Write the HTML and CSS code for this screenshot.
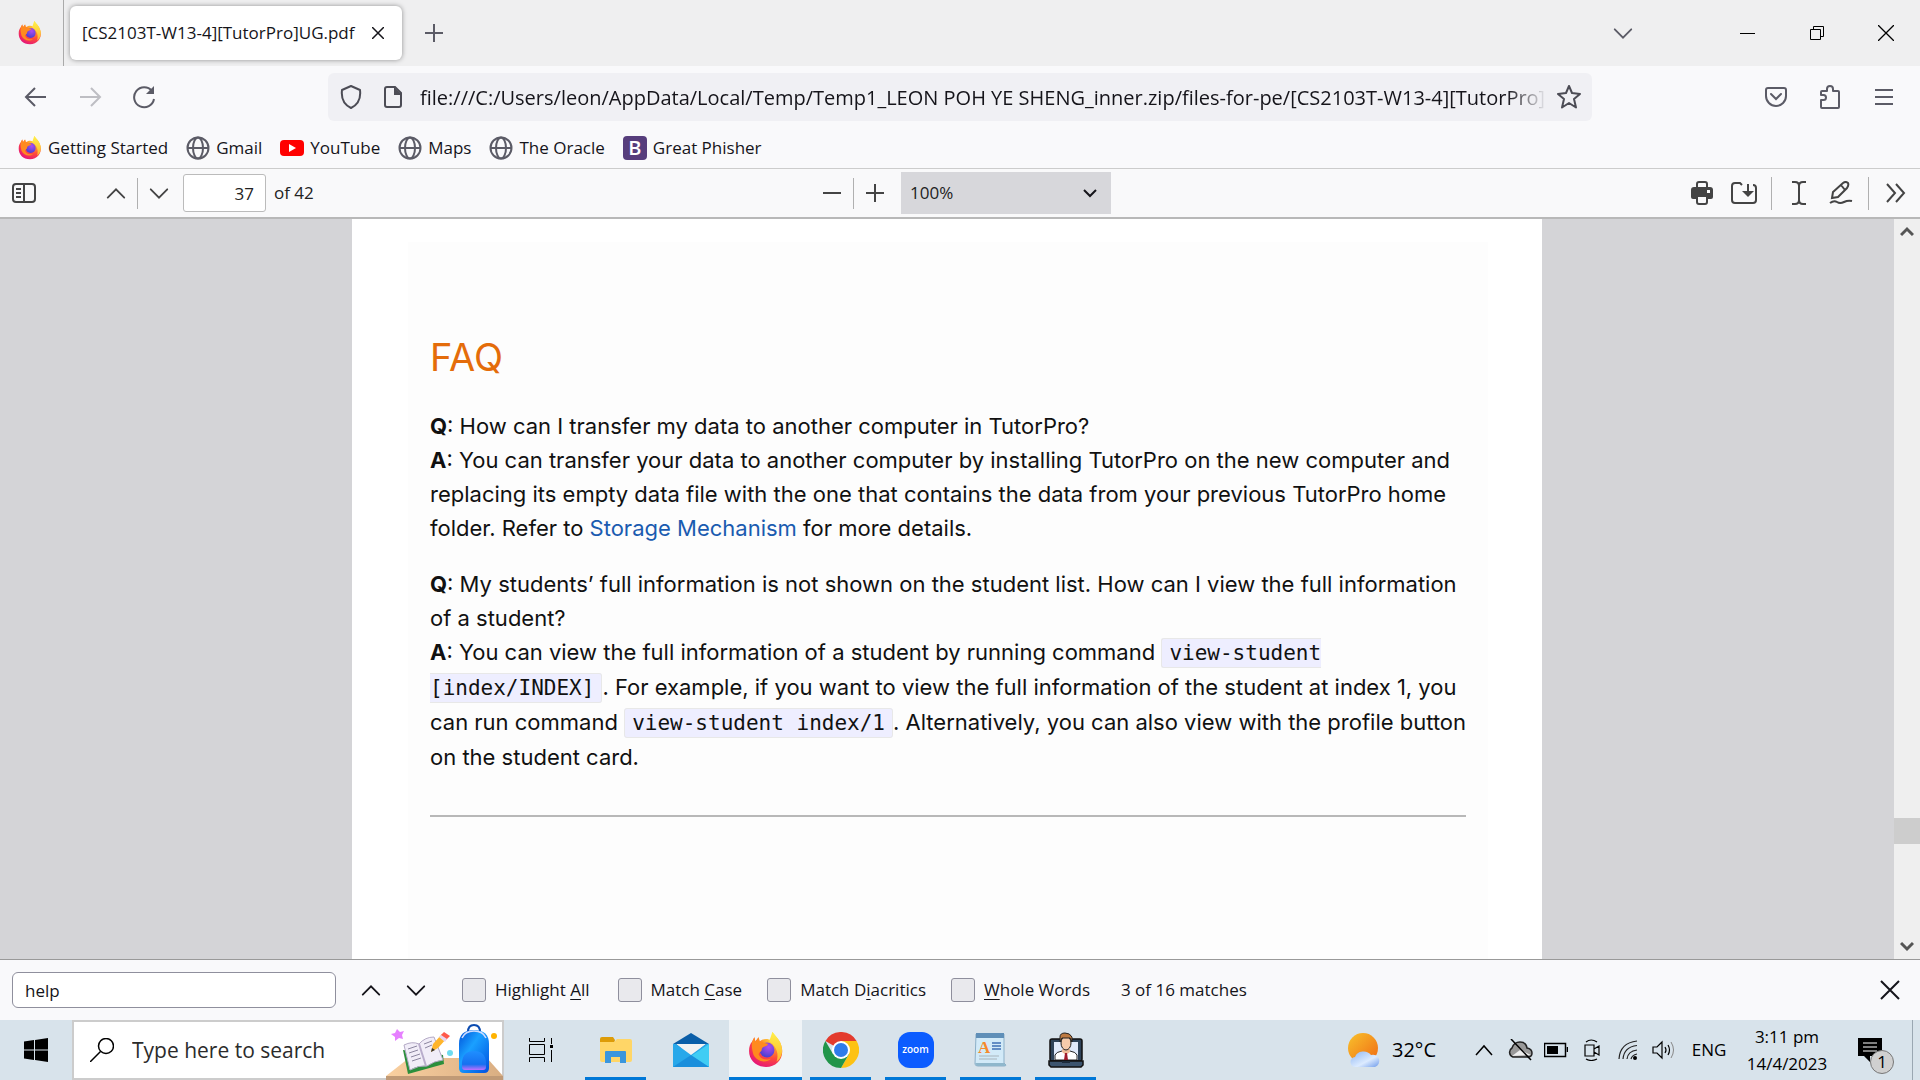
FILE: index.html
```html
<!DOCTYPE html>
<html lang="en">
<head>
<meta charset="utf-8">
<title>[CS2103T-W13-4][TutorPro]UG.pdf</title>
<link rel="stylesheet" href="styles.css">
</head>
<body>
<svg class="defs" aria-hidden="true">
  <defs>
    <radialGradient id="fx-body" cx="0.75" cy="0.1" r="1">
      <stop offset="0" stop-color="#fff44f"/><stop offset="0.35" stop-color="#ffa22a"/><stop offset="0.65" stop-color="#ff4b3a"/><stop offset="1" stop-color="#e3127d"/>
    </radialGradient>
    <radialGradient id="fx-globe" cx="0.6" cy="0.3" r="0.7">
      <stop offset="0" stop-color="#b04cf0"/><stop offset="1" stop-color="#4a3fd0"/>
    </radialGradient>
    <linearGradient id="fx-flame" x1="0" y1="0" x2="0" y2="1">
      <stop offset="0" stop-color="#fff04a"/><stop offset="1" stop-color="#ffb52e"/>
    </linearGradient>
    <symbol id="firefox" viewBox="0 0 32 34">
      <path d="M3 9 5 5l1 4 3-4 1 4c3-3 8-3 11-1l1-8c3 4 8 8 9 15 2 10-5 18-15 18S0 26 0 18c0-4 1-7 3-9z" fill="url(#fx-body)"/>
      <path d="M22 0c3 4 8 8 9 15 1 6-2 11-5 13 2-6 1-14-7-19 1-3 2-6 3-9z" fill="url(#fx-flame)"/>
      <circle cx="17" cy="17" r="7" fill="url(#fx-globe)"/>
      <path d="M3 9l2-4 1 4 3-4 1 4c3 0 5 2 8 2-1 3-5 2-6 5 0 3-2 2-3 5 2 5 8 6 12 4-5 5-14 3-17-4-1-4-2-8-1-12z" fill="#ff8a1f"/>
    </symbol>
    <symbol id="globe" viewBox="0 0 24 24">
      <g fill="none" stroke="#5b5b66" stroke-width="2"><circle cx="12" cy="12" r="10.500"/><ellipse cx="12" cy="12" rx="5" ry="10.500"/><path d="M2 12h20"/></g>
    </symbol>
    <symbol id="up" viewBox="0 0 24 24"><path d="M3 17l9-9 9 9" fill="none" stroke="currentColor" stroke-width="2" stroke-linecap="round"/></symbol>
    <symbol id="down" viewBox="0 0 24 24"><path d="M3 8l9 9 9-9" fill="none" stroke="currentColor" stroke-width="2" stroke-linecap="round"/></symbol>
    <symbol id="cross" viewBox="0 0 24 24"><path d="M3 3l18 18M21 3L3 21" fill="none" stroke="currentColor" stroke-width="2"/></symbol>
  </defs>
</svg>

<header class="tabs">
  <button class="home" aria-label="Firefox View"><svg width="24" height="24"><use href="#firefox"/></svg></button>
  <div class="tab">
    <span>[CS2103T-W13-4][TutorPro]UG.pdf</span>
    <button class="plain" aria-label="Close tab"><svg width="12" height="12" viewBox="0 0 12 12"><path d="M0 0l12 12M12 0L0 12" stroke="#15141a" stroke-width="1.500"/></svg></button>
  </div>
  <button class="icon-btn" aria-label="New tab"><svg width="18" height="18" viewBox="0 0 18 18"><path d="M9 0v18M0 9h18" stroke="#5b5b66" stroke-width="2"/></svg></button>
  <div class="window-buttons">
    <button class="icon-btn list-tabs" aria-label="List all tabs"><svg width="22" height="22"><use href="#down"/></svg></button>
    <button aria-label="Minimize"><svg width="16" height="16" viewBox="0 0 16 16"><path d="M0 8.500h15" stroke="#000"/></svg></button>
    <button aria-label="Restore"><svg width="16" height="16" viewBox="0 0 16 16"><path d="M1.500 4.500h10v10h-10zM4.500 4V1.500h10v10H12" fill="none" stroke="#000"/></svg></button>
    <button aria-label="Close"><svg width="16" height="16" viewBox="0 0 16 16"><path d="M0 0l16 16M16 0L0 16" stroke="#000" stroke-width="1.300"/></svg></button>
  </div>
</header>

<nav class="nav">
  <button class="icon-btn" aria-label="Back"><svg width="24" height="24" viewBox="0 0 24 24"><path d="M22 12H3M11 3l-9 9 9 9" fill="none" stroke="#5b5b66" stroke-width="2"/></svg></button>
  <button class="icon-btn" aria-label="Forward" disabled><svg width="24" height="24" viewBox="0 0 24 24"><path d="M2 12h19M13 3l9 9-9 9" fill="none" stroke="#bebec3" stroke-width="2"/></svg></button>
  <button class="icon-btn" aria-label="Reload"><svg width="24" height="24" viewBox="0 0 24 24"><path d="M20 6a10 10 0 1 0 2 8" fill="none" stroke="#5b5b66" stroke-width="2"/><path d="M22 1v8h-8z" fill="#5b5b66"/></svg></button>
  <div class="url">
    <svg width="24" height="24" viewBox="0 0 24 24"><path d="M12 1l9 4c1 8-1 14-9 18C4 19 2 13 3 5z" fill="none" stroke="#4c4c55" stroke-width="2" stroke-linejoin="round"/></svg>
    <svg width="20" height="22" viewBox="0 0 20 22"><path d="M4 1h8l6 6v12a2 2 0 0 1-2 2H4a2 2 0 0 1-2-2V3a2 2 0 0 1 2-2z" fill="none" stroke="#4c4c55" stroke-width="2"/><path d="M11 1l8 8h-8z" fill="#4c4c55"/></svg>
    <input type="text" aria-label="Address" value="file:///C:/Users/leon/AppData/Local/Temp/Temp1_LEON POH YE SHENG_inner.zip/files-for-pe/[CS2103T-W13-4][TutorPro]UG.pdf">
    <button class="plain" aria-label="Bookmark this page"><svg width="24" height="24" viewBox="0 0 24 24"><path d="M12 1l3 7 8 1-6 5 2 8.500L12 18l-7 4.500L7 14 1 9l8-1z" fill="none" stroke="#4c4c55" stroke-width="2" stroke-linejoin="round"/></svg></button>
  </div>
  <button class="icon-btn" aria-label="Save to Pocket"><svg width="22" height="22" viewBox="0 0 22 22"><path d="M3 2h16q2 0 2 2v6a10 10 0 0 1-20 0V4q0-2 2-2z" fill="none" stroke="#5b5b66" stroke-width="2"/><path d="M6 8l5 5 5-5" fill="none" stroke="#5b5b66" stroke-width="2" stroke-linecap="round"/></svg></button>
  <button class="icon-btn" aria-label="Extensions"><svg width="24" height="24" viewBox="0 0 24 24"><path d="M3 22v-7h2.500a2.500 2.500 0 0 0 0-5H3V7q0-1 1-1h5V4a3 3 0 0 1 6 0v2h5q1 0 1 1v15q0 1-1 1H4q-1 0-1-1z" fill="none" stroke="#5b5b66" stroke-width="2" stroke-linejoin="round"/></svg></button>
  <button class="icon-btn" aria-label="Menu"><svg width="20" height="20" viewBox="0 0 20 20"><path d="M1 3h18M1 10h18M1 17h18" stroke="#5b5b66" stroke-width="2"/></svg></button>
</nav>

<nav class="bookmarks">
  <a href="#"><svg width="24" height="24"><use href="#firefox"/></svg>Getting Started</a>
  <a href="#"><svg width="24" height="24"><use href="#globe"/></svg>Gmail</a>
  <a href="#"><svg width="24" height="24" viewBox="0 0 24 24"><rect y="4" width="24" height="16" rx="4" fill="#f00"/><path d="M9 8v8l7-4z" fill="#fff"/></svg>YouTube</a>
  <a href="#"><svg width="24" height="24"><use href="#globe"/></svg>Maps</a>
  <a href="#"><svg width="24" height="24"><use href="#globe"/></svg>The Oracle</a>
  <a href="#"><span class="letter">B</span>Great Phisher</a>
</nav>

<div class="pdfbar">
  <div class="group">
    <button class="tool" aria-label="Toggle sidebar"><svg width="24" height="20" viewBox="0 0 24 20"><rect x="1" y="1" width="22" height="18" rx="3" fill="none" stroke="#444" stroke-width="2"/><path d="M12 1v18M4 6h5M4 10h5M4 14h5" stroke="#444" stroke-width="2"/></svg></button>
    <button class="tool prev" aria-label="Previous page"><svg width="22" height="22"><use href="#up"/></svg></button>
    <span class="sep"></span>
    <button class="tool" aria-label="Next page"><svg width="22" height="22"><use href="#down"/></svg></button>
    <input class="page-number" type="text" aria-label="Page" value="37">
    <span>of 42</span>
  </div>
  <div class="group zoom">
    <button class="tool" aria-label="Zoom out"><svg width="18" height="18" viewBox="0 0 18 18"><path d="M0 9h18" stroke="#444" stroke-width="2"/></svg></button>
    <span class="sep"></span>
    <button class="tool" aria-label="Zoom in"><svg width="18" height="18" viewBox="0 0 18 18"><path d="M9 0v18M0 9h18" stroke="#444" stroke-width="2"/></svg></button>
    <span class="select"><select aria-label="Zoom"><option>100%</option></select><svg width="14" height="14" viewBox="0 0 14 14"><path d="M1 4l6 6 6-6" fill="none" stroke="#15141a" stroke-width="2"/></svg></span>
  </div>
  <div class="group end">
    <button class="tool" aria-label="Print"><svg width="24" height="24" viewBox="0 0 24 24"><path d="M4 6h16a3 3 0 0 1 3 3v7q0 2-2 2H3q-2 0-2-2V9a3 3 0 0 1 3-3z" fill="#444"/><path d="M7 7V3q0-2 2-2h6q2 0 2 2v4" fill="none" stroke="#444" stroke-width="2"/><path d="M7 15v6q0 2 2 2h6q2 0 2-2v-6z" fill="#f9f9fa" stroke="#444" stroke-width="2"/><rect x="17" y="9" width="3" height="3" fill="#fff"/></svg></button>
    <button class="tool" aria-label="Save"><svg width="26" height="22" viewBox="0 0 26 22"><path d="M11 3L9 1H4Q1 1 1 4v14q0 3 3 3h18q3 0 3-3V6q0-3-3-3" fill="none" stroke="#444" stroke-width="2"/><path d="M17 2v8" stroke="#444" stroke-width="2"/><path d="M11 9h12l-6 6z" fill="#444"/></svg></button>
    <span class="sep"></span>
    <button class="tool" aria-label="Text"><svg width="14" height="24" viewBox="0 0 14 24"><path d="M0 1h3q4 0 4 4v14q0 4-4 4H0M14 1h-3q-4 0-4 4v14q0 4 4 4h3" fill="none" stroke="#444" stroke-width="2"/></svg></button>
    <button class="tool" aria-label="Draw"><svg width="24" height="24" viewBox="0 0 24 24"><path d="M3 17l1-6L14 2q3-2 5 0 1 2-1 5L9 16zM12 4l4 5" fill="none" stroke="#444" stroke-width="2"/><path d="M1 22q4-3 7-1t7 0 8-1" fill="none" stroke="#444" stroke-width="2"/></svg></button>
    <span class="sep"></span>
    <button class="tool" aria-label="More tools"><svg width="20" height="20" viewBox="0 0 20 20"><path d="M1 1l8 9-8 9M10 1l8 9-8 9" fill="none" stroke="#444" stroke-width="2"/></svg></button>
  </div>
</div>

<main class="viewer">
  <div class="canvas">
    <article class="sheet">
      <div class="content">
        <h1>FAQ</h1>
        <p><b>Q</b>: How can I transfer my data to another computer in TutorPro?<br>
        <b>A</b>: You can transfer your data to another computer by installing TutorPro on the new computer and replacing its empty data file with the one that contains the data from your previous TutorPro home folder. Refer to <a href="#">Storage Mechanism</a> for more details.</p>
        <p><b>Q</b>: My students’ full information is not shown on the student list. How can I view the full information of a student?<br>
        <b>A</b>: You can view the full information of a student by running command <code>view-student [index/INDEX]</code>. For example, if you want to view the full information of the student at index 1, you can run command <code>view-student index/1</code>. Alternatively, you can also view with the profile button on the student card.</p>
        <hr>
      </div>
    </article>
  </div>
  <div class="scrollbar">
    <button aria-label="Scroll up"><svg width="14" height="12" viewBox="0 0 14 12"><path d="M1 10l6-6 6 6" fill="none" stroke="#555" stroke-width="3"/></svg></button>
    <div class="above"></div><div class="thumb"></div><div class="below"></div>
    <button aria-label="Scroll down"><svg width="14" height="12" viewBox="0 0 14 12"><path d="M1 2l6 6 6-6" fill="none" stroke="#555" stroke-width="3"/></svg></button>
  </div>
</main>

<form class="findbar">
  <input class="find" type="text" aria-label="Find in page" value="help">
  <button type="button" class="find-btn" aria-label="Previous match"><svg width="22" height="22"><use href="#up"/></svg></button>
  <button type="button" class="find-btn" aria-label="Next match"><svg width="22" height="22"><use href="#down"/></svg></button>
  <label class="first"><input type="checkbox"><span>Highlight <u>A</u>ll</span></label>
  <label><input type="checkbox"><span>Match <u>C</u>ase</span></label>
  <label><input type="checkbox"><span>Match D<u>i</u>acritics</span></label>
  <label><input type="checkbox"><span><u>W</u>hole Words</span></label>
  <output>3 of 16 matches</output>
  <button type="button" class="plain close" aria-label="Close find bar"><svg width="24" height="24"><use href="#cross"/></svg></button>
</form>

<footer class="taskbar">
  <button class="start" aria-label="Start"><svg width="24" height="24" viewBox="0 0 24 24"><path d="M0 3.500L10 2v9.500H0zM11 2L24 0v11.500H11zM0 12.500h10V22L0 20.500zM11 12.500h13V24l-13-2z"/></svg></button>
  <div class="search">
    <svg width="24" height="24" viewBox="0 0 24 24"><circle cx="16" cy="8" r="7.500" fill="none" stroke="#000" stroke-width="1.500"/><path d="M10.500 13.500L0 24" stroke="#000" stroke-width="1.500"/></svg>
    <input type="text" aria-label="Search" placeholder="Type here to search">
    <svg class="art" width="120" height="60" viewBox="0 0 120 60">
      <defs>
        <linearGradient id="bag" x1="0" y1="0" x2="1" y2="1"><stop offset="0" stop-color="#0050d8"/><stop offset="0.4" stop-color="#1aa0ff"/><stop offset="1" stop-color="#0050e0"/></linearGradient>
        <linearGradient id="pocket" x1="0" y1="0" x2="0" y2="1"><stop offset="0" stop-color="#1f8fff"/><stop offset="0.7" stop-color="#1670f0"/><stop offset="1" stop-color="#c070ff"/></linearGradient>
        <linearGradient id="desk" x1="0" y1="0" x2="1" y2="0"><stop offset="0" stop-color="#fad0a0"/><stop offset="1" stop-color="#d9ae82"/></linearGradient>
      </defs>
      <path d="M25 38h78l16 18H2z" fill="url(#desk)"/><path d="M2 56h117v4H2z" fill="#c09a76"/>
      <path d="M13 9l3 3 4-1-2 4 1 4-4-1-4 3v-4l-4-3 4-1z" fill="#e680ff"/>
      <path d="M19 30l5 24 36-10-1-9z" fill="#2b8f3c"/><path d="M20 25q8-4 15-1 6-7 15-7l9 23q-9 1-16 6-8-1-17 4z" fill="#f1edf8" stroke="#b4aac6"/>
      <path d="M35 24l7 22" stroke="#b9adcc" stroke-width="2"/>
      <path d="M24 29l9-3M25 33l9-3M27 37l9-3M28 41l9-3M40 24l8-3M41 28l7-3" stroke="#8c86a0"/>
      <path d="M47 32l2-8 9-10 5 4-9 10z" fill="#ffb52c"/><path d="M47 32l1-4 3 2z" fill="#333"/><path d="M57 15l3-3 6 4-4 4z" fill="#ff5a4c"/><path d="M55 17l2-2 6 4-2 3z" fill="#e8d8f0"/>
      <circle cx="66" cy="33" r="3" fill="#6edbf0"/><circle cx="110" cy="16" r="3" fill="#ffb300"/>
      <path d="M84 12q0-7 6-7t6 7" fill="none" stroke="#0b4bb0" stroke-width="2"/>
      <path d="M75 24q0-14 15-14t15 14v24q0 5-5 5H80q-5 0-5-5z" fill="url(#bag)"/>
      <path d="M78 18q3-7 12-7t12 7" fill="none" stroke="#d0dcff" stroke-width="1.500"/>
      <path d="M78 42q1-11 12-11t12 11v5q0 3-3 3H81q-3 0-3-3z" fill="url(#pocket)"/>
    </svg>
  </div>
  <div class="apps">
    <button aria-label="Task view"><svg width="24" height="24" viewBox="0 0 24 24"><path d="M.5 0v3.500h15V0M.5 6.500h15v10H.5zM.5 24v-4.500h15V24M22.500 0v6M22.500 12v12" fill="none" stroke="#000"/><path d="M21 7h3v3h-3z"/></svg></button>
    <button class="open" aria-label="File Explorer"><svg width="36" height="36" viewBox="0 0 36 36"><path d="M2 7q0-2 2-2h11l2 3-1 4H2z" fill="#dd9c08"/><path d="M2 10h14l3-3h13q2 0 2 2v19q0 2-2 2H4q-2 0-2-2z" fill="#ffd667"/><path d="M7 31V20q0-1 1-1h19q1 0 1 1v11h-6v-6h-9v6z" fill="#3a96dd"/></svg></button>
    <button aria-label="Mail"><svg width="36" height="36" viewBox="0 0 36 36"><path d="M0 12L18 1l18 11v4H0z" fill="#0a5ea8"/><path d="M3 12h30L18 24z" fill="#f2f2f2"/><path d="M0 12h3l15 11 15-11h3v23H0z" fill="#28a8ea"/><path d="M36 12L18 24l18 11z" fill="#40cdf4"/><path d="M0 35l18-12 18 12z" fill="#1a8fdc"/></svg></button>
    <button class="open active" aria-label="Firefox"><svg width="36" height="36"><use href="#firefox"/></svg></button>
    <button class="open" aria-label="Chrome"><svg width="36" height="36" viewBox="0 0 36 36"><path d="M18 18L2.400 9A18 18 0 0 1 33.600 9z" fill="#e33b2e"/><path d="M18 18V9h15.600A18 18 0 0 1 18 36l8-14z" fill="#fdc213"/><path d="M18 18l8 4-8 14A18 18 0 0 1 2.400 9L10 22z" fill="#21954a"/><circle cx="18" cy="18" r="9" fill="#fff"/><circle cx="18" cy="18" r="7" fill="#2f7bea"/></svg></button>
    <button class="open" aria-label="Zoom"><span class="zoom-app">zoom</span></button>
    <button class="open" aria-label="WordPad"><svg width="36" height="36" viewBox="0 0 36 36"><path d="M3 2h28v29l2 2q0 1-2 1H5q-3 0-3-2z" fill="#d2eaf8" stroke="#8db0c8"/><path d="M3 1h28v5H3z" fill="#5f8fb8"/><path d="M19 11h9M19 14h9M19 17h9" stroke="#3f70b4" stroke-width="1.500"/><path d="M6 24h20M6 27h18" stroke="#a8b4bc"/><path d="M2 31h29l2 3H4z" fill="#8fb7cc"/><text x="5" y="21" class="wordpad-letter">A</text></svg></button>
    <button class="open" aria-label="TutorPro"><svg width="36" height="36" viewBox="0 0 36 36"><rect x="2" y="7" width="32" height="22" rx="2" fill="#2f4359" stroke="#111" stroke-width="1.500"/><path d="M6 10h24v18H6z" fill="#dfe9fa"/><path d="M7 28v-5q1-3 7-4h8q6 1 7 4v5z" fill="#fff" stroke="#222"/><path d="M14 17h8v3l-4 3-4-3z" fill="#eebc98"/><path d="M17 21h2l1 7h-4z" fill="#a01c2c"/><ellipse cx="18" cy="11" rx="5" ry="7" fill="#f5cbab" stroke="#222"/><path d="M12 10V5q0-4 5-4t7 4v5l-2-4h-8z" fill="#bd7a42" stroke="#222"/><path d="M1 29h34v4l-2 2H3l-2-2z" fill="#3b546e" stroke="#111" stroke-width="1.500"/><path d="M14 29h8v2h-8z" fill="#1c2c3c"/></svg></button>
  </div>
  <div class="tray">
    <button class="weather"><svg width="36" height="36" viewBox="0 0 36 36"><defs><linearGradient id="sun" x1="0" y1="0" x2="1" y2="1"><stop offset="0" stop-color="#f8c22c"/><stop offset="1" stop-color="#f06a14"/></linearGradient><linearGradient id="cloud" x1="0" y1="0" x2="1" y2="1"><stop offset="0" stop-color="#8fb6f2"/><stop offset="0.6" stop-color="#dcebff"/><stop offset="1" stop-color="#6f9bea"/></linearGradient></defs><circle cx="17" cy="16" r="15" fill="url(#sun)"/><path d="M10 35a5 5 0 0 1-1-10 9 8 0 0 1 16-2 6 6 0 0 1 4 12z" fill="url(#cloud)"/></svg>32°C</button>
    <button aria-label="Show hidden icons"><svg width="18" height="12" viewBox="0 0 18 12"><path d="M1 11l8-9 8 9" fill="none" stroke="#000" stroke-width="1.500"/></svg></button>
    <button aria-label="OneDrive"><svg width="26" height="22" viewBox="0 0 26 22"><path d="M6 18a5 5 0 0 1-1-9q2-6 8-6t7 6q5 1 5 5t-4 4z" fill="#999" stroke="#222" stroke-width="1.500"/><path d="M5 17l8-6 11 5z" fill="#eee"/><path d="M4 0l20 21" stroke="#000" stroke-width="1.500"/></svg></button>
    <button aria-label="Battery"><svg width="24" height="16" viewBox="0 0 24 16"><path d="M.500 1.500h21v13H.500zM23.500 5v5" fill="none" stroke="#000" stroke-width="1.500"/><path d="M3 4h11v8H3z"/></svg></button>
    <button aria-label="Camera"><svg width="18" height="22" viewBox="0 0 18 22"><path d="M2 6h9v11H2zM11 10l5-3v9l-5-3M3 3q5-4 11 0M3 20q5 3 11 0" fill="none" stroke="#000" stroke-width="1.200"/></svg></button>
    <button aria-label="Network"><svg width="20" height="20" viewBox="0 0 20 20"><path d="M1 19Q2 3 19 1M5 19Q6 7 19 5.500M9 19q1-8 10-9M13 19q1-4 6-5" fill="none" stroke="#222" stroke-width="1.200"/><circle cx="17" cy="18" r="2"/></svg></button>
    <button aria-label="Volume"><svg width="24" height="20" viewBox="0 0 24 20"><path d="M1 7h4l5-5v16l-5-5H1zM13 7q2 3 0 6M16 5q3 5 0 10" fill="none" stroke="#000" stroke-width="1.200"/><path d="M19 2q5 8 0 16" fill="none" stroke="#888"/></svg></button>
    <button class="lang">ENG</button>
    <button class="clock">3:11 pm<br>14/4/2023</button>
    <button class="notices" aria-label="Notifications"><svg width="24" height="24" viewBox="0 0 24 24"><path d="M0 0h24v18H12v6l-6-6H0z"/><path d="M5 5h14M5 9h14M5 13h14" stroke="#fff"/></svg><span class="badge">1</span></button>
    <button class="desktop" aria-label="Show desktop"></button>
  </div>
</footer>
</body>
</html>
```
FILE: styles.css
```css
* { box-sizing: border-box; }
body {
  margin: 0;
  height: 100vh;
  display: flex;
  flex-direction: column;
  overflow: hidden;
  font: 17px/24px "Open Sans", "Noto Sans", sans-serif;
  color: #15141a;
  background: #f9f9fb;
}
button, input, select { font: inherit; color: inherit; }
button {
  display: flex;
  align-items: center;
  justify-content: center;
  padding: 0;
  border: 0;
  background: none;
}
svg { display: block; flex: none; }
.defs { position: absolute; width: 0; height: 0; }

/* Tab strip */
.tabs { display: flex; align-items: center; height: 66px; flex: none; background: #efeff0; color: #5b5b66; }
.home { width: 64px; height: 66px; padding-right: 4px; border-right: 1px solid #aaa; }
.tab {
  display: flex;
  align-items: center;
  justify-content: space-between;
  width: 332px;
  height: 54px;
  margin: 0 8px 0 6px;
  padding: 0 18px 0 12px;
  border-radius: 6px;
  background: #fff;
  box-shadow: 0 0 5px rgba(0, 0, 0, 0.4);
  color: #15141a;
  white-space: nowrap;
}
.icon-btn { width: 48px; height: 48px; flex: none; }
.window-buttons { display: flex; margin-left: auto; height: 66px; }
.window-buttons button { width: 69px; height: 66px; }
.window-buttons .list-tabs { width: 48px; margin-right: 66px; }

/* Navigation */
.nav { display: flex; align-items: center; gap: 6px; height: 60px; padding: 2px 12px 0; flex: none; }
.url {
  display: flex;
  align-items: center;
  flex: 1;
  min-width: 0;
  height: 48px;
  margin: 0 154px;
  padding: 0 11px;
  border-radius: 6px;
  background: #f0f0f4;
}
.url input {
  flex: 1;
  min-width: 0;
  height: 40px;
  margin: 0 10px 0 17px;
  padding: 0;
  border: 0;
  background: none;
  font-size: 20px;
  mask-image: linear-gradient(to left, transparent, #000 40px);
}
.url svg + svg { margin-left: 20px; }

.bookmarks {
  display: flex;
  align-items: center;
  gap: 18px;
  height: 43px;
  flex: none;
  padding: 1px 18px 0;
  border-bottom: 1px solid #ccc;
}
.bookmarks a { display: flex; align-items: center; gap: 6px; color: inherit; text-decoration: none; }
.letter {
  width: 24px;
  height: 24px;
  border-radius: 4px;
  background: #563d7c;
  color: #fff;
  font-size: 20px;
  font-weight: 600;
  text-align: center;
}

/* PDF toolbar */
.pdfbar {
  display: grid;
  grid-template-columns: 1fr auto 1fr;
  align-items: center;
  height: 50px;
  flex: none;
  border-bottom: 2px solid #b8b8b8;
  background: #f9f9fa;
  color: #222;
}
.group { display: flex; align-items: center; }
.group.zoom { padding-left: 2px; }
.group.end { justify-content: flex-end; padding-right: 3px; }
.tool { width: 42px; height: 42px; color: #444; }
.group:first-child { padding-left: 3px; }
.prev { margin-left: 50px; }
.sep { width: 1px; height: 31px; background: #b0b0b0; }
.page-number {
  width: 83px;
  height: 38px;
  margin: 0 8px 0 3px;
  padding: 0 11px;
  border: 1px solid #bbb;
  border-radius: 3px;
  background: #fff;
  text-align: right;
}
.end .sep { height: 33px; margin: 0 6px; }
.select {
  display: grid;
  align-items: center;
  width: 210px;
  height: 42px;
  margin-left: 5px;
  background: #d7d7db;
}
.select > * { grid-area: 1 / 1; }
.select select { appearance: none; width: 100%; height: 42px; padding: 0 9px; border: 0; background: none; }
.select svg { justify-self: end; margin-right: 14px; pointer-events: none; }

/* Document */
.viewer { display: flex; flex: 1; min-height: 0; }
.canvas { flex: 1; overflow: hidden; background: #d4d4d7; }
.sheet { width: 100%; max-width: 1190px; min-height: 100%; margin: 0 auto; padding: 23px 54px 0 56px; background: #fff; }
.content {
  min-height: 800px;
  padding: 90px 12px 0 22px;
  background: #fdfdfd;
  color: #111;
  font: 22px/34px Inter, sans-serif;
}
.content h1 { margin: 0 0 27px; color: #e46c0a; font-size: 38px; line-height: 50px; font-weight: 400; }
.content p { margin: 0 0 22px; }
.content b { font-weight: 700; }
.content a { color: #1a5bb0; text-decoration: none; }
.content code {
  padding: 2px 7px;
  border: 1px solid #e8e8e8;
  border-radius: 3px;
  background: #eef;
  font: 21px/34px "DejaVu Sans Mono", monospace;
}
.content hr { margin: 41px 10px 0 0; border: 0; border-top: 2px solid #b8b8b8; }

.scrollbar { display: flex; flex-direction: column; width: 26px; background: #efefef; }
.scrollbar button { height: 24px; }
.above { flex: 575; }
.thumb { height: 26px; background: #cdcdcd; }
.below { flex: 91; }

/* Find bar */
.findbar {
  display: flex;
  align-items: center;
  height: 61px;
  flex: none;
  padding: 0 18px 0 12px;
  border-top: 1px solid #999;
  background: #f9f9fb;
}
.find {
  width: 324px;
  height: 36px;
  margin-right: 12px;
  padding: 0 12px;
  border: 1px solid #8f8f9d;
  border-radius: 6px;
  background: #fff;
}
.find-btn { width: 45px; height: 36px; }
.findbar label { display: flex; align-items: center; gap: 9px; margin-right: 25px; }
.findbar .first { margin: 0 28px 0 24px; }
.findbar label input {
  appearance: none;
  width: 24px;
  height: 24px;
  margin: 0;
  border: 1px solid #8f8f9d;
  border-radius: 3px;
  background: #e9e9ed;
}
.findbar output { margin-left: 6px; }
u { text-underline-offset: 3px; }
.close { margin-left: auto; }

/* Taskbar */
.taskbar { display: flex; height: 60px; flex: none; background: #d8e3eb; color: #000; }
.start { width: 72px; }
.search {
  display: flex;
  align-items: center;
  width: 432px;
  border: 2px solid #ccc;
  background: #fff;
  padding-left: 16px;
}
.search input {
  flex: 1;
  min-width: 0;
  height: 50px;
  padding: 0 0 0 18px;
  border: 0;
  background: none;
  font-size: 21px;
}
.search input::placeholder { color: #2b2b2b; opacity: 1; }
.art { margin-right: -2px; }
.apps { display: flex; gap: 2px; }
.apps button { width: 73px; }
.apps .open {
  background: linear-gradient(#0078d7, #0078d7) center bottom / 61px 3px no-repeat;
}
.apps .active { background-size: 100% 3px; background-color: #f0f4f7; }
.zoom-app {
  width: 36px;
  height: 36px;
  border-radius: 12px;
  background: #0b5cff;
  color: #fff;
  font-size: 10px;
  font-weight: 600;
  line-height: 34px;
}
.wordpad-letter { font: bold 17px "Liberation Serif", serif; fill: #f58a2e; }
.tray { display: flex; margin-left: auto; }
.tray button { width: 36px; }
.tray .weather { width: auto; gap: 10px; margin-right: 30px; font-size: 20px; }
.tray .lang { width: 54px; }
.tray .clock { width: 102px; line-height: 27px; }
.tray .notices { position: relative; width: 74px; padding-right: 10px; }
.badge {
  position: absolute;
  right: 18px;
  bottom: 6px;
  width: 24px;
  height: 24px;
  border: 1px solid #777;
  border-radius: 50%;
  background: #d0d0d0;
  line-height: 22px;
}
.tray .desktop { width: 8px; border-left: 1px solid #9aa7b2; }
```
